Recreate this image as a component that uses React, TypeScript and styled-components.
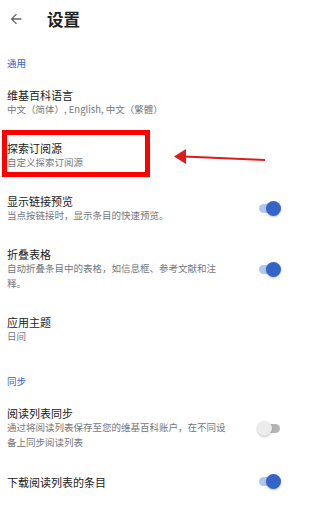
import React from "react";
import styled, { createGlobalStyle } from "styled-components";

const Global = createGlobalStyle`
  html, body { margin: 0; padding: 0; background: #ffffff; }
  body { font-family: "Noto Sans CJK SC", "Noto Sans", sans-serif; }
  * { box-sizing: border-box; }
`;

const Page = styled.div`
  width: 322px;
  min-height: 508px;
  background: #ffffff;
  overflow: hidden;
`;

const Header = styled.header`
  height: 38px;
  display: flex;
  align-items: center;
  padding-left: 8px;
  gap: 23px;
`;

const BackIcon = styled.svg`
  width: 16px;
  height: 16px;
  fill: #5f6368;
  flex: none;
`;

const Title = styled.h1`
  margin: 0;
  font-size: 16.5px;
  font-weight: 700;
  color: #202122;
  line-height: 20px;
`;

const SectionLabel = styled.div`
  padding: 18px 7px 6px;
  font-size: 9.5px;
  line-height: 14px;
  color: #3366cc;
`;

const Row = styled.div`
  position: relative;
  display: flex;
  align-items: center;
  gap: 28px;
  padding: 12px 41px 12px 7px;
`;

const TextCol = styled.div`
  flex: 1;
  min-width: 0;
`;

const ItemTitle = styled.div`
  font-size: 11px;
  line-height: 14px;
  color: #202122;
`;

const ItemSub = styled.div`
  font-size: 9.5px;
  line-height: 15px;
  color: #72777d;
`;

const Track = styled.div<{ $on: boolean }>`
  position: relative;
  width: 24px;
  height: 15px;
  flex: none;
  &::before {
    content: "";
    position: absolute;
    left: 2px;
    right: 1px;
    top: 3px;
    height: 9px;
    border-radius: 5px;
    background: ${(p) => (p.$on ? "#b3c6ef" : "#b5b5b5")};
  }
`;

const Knob = styled.div<{ $on: boolean }>`
  position: absolute;
  top: 0;
  left: ${(p) => (p.$on ? "9px" : "0")};
  width: 15px;
  height: 15px;
  border-radius: 50%;
  background: ${(p) => (p.$on ? "#3365c9" : "#ececec")};
  box-shadow: 0 1px 2px rgba(0, 0, 0, 0.25);
`;

const HighlightBox = styled.div`
  position: absolute;
  left: 2px;
  top: 1px;
  width: 148px;
  height: 47px;
  border: 5px solid #ff0000;
  pointer-events: none;
`;

const PointerArrow = styled.svg`
  position: absolute;
  left: 170px;
  top: 15px;
  width: 100px;
  height: 25px;
  overflow: visible;
`;

const Switch = ({ on }: { on: boolean }) => (
  <Track $on={on}>
    <Knob $on={on} />
  </Track>
);

type Item = {
  title: string;
  sub?: string;
  toggle?: boolean;
  highlight?: boolean;
};

const SettingRow = ({ title, sub, toggle, highlight }: Item) => (
  <Row>
    <TextCol>
      <ItemTitle>{title}</ItemTitle>
      {sub && <ItemSub>{sub}</ItemSub>}
    </TextCol>
    {toggle !== undefined && <Switch on={toggle} />}
    {highlight && (
      <>
        <HighlightBox />
        <PointerArrow viewBox="0 0 100 25">
          <line x1="14" y1="12.5" x2="95" y2="16" stroke="#e01b1b" strokeWidth="2" />
          <polygon points="4,12.5 16,5 16,20" fill="#e01b1b" />
        </PointerArrow>
      </>
    )}
  </Row>
);

const general: Item[] = [
  { title: "维基百科语言", sub: "中文（简体）, English, 中文（繁體）" },
  { title: "探索订阅源", sub: "自定义探索订阅源", highlight: true },
  { title: "显示链接预览", sub: "当点按链接时，显示条目的快速预览。", toggle: true },
  {
    title: "折叠表格",
    sub: "自动折叠条目中的表格，如信息框、参考文献和注释。",
    toggle: true,
  },
  { title: "应用主题", sub: "日间" },
];

const sync: Item[] = [
  {
    title: "阅读列表同步",
    sub: "通过将阅读列表保存至您的维基百科账户，在不同设备上同步阅读列表",
    toggle: false,
  },
  { title: "下载阅读列表的条目", toggle: true },
];

export default function App() {
  return (
    <Page>
      <Global />
      <Header>
        <BackIcon viewBox="0 0 24 24">
          <path d="M20 11H7.83l5.59-5.59L12 4l-8 8 8 8 1.41-1.41L7.83 13H20v-2z" />
        </BackIcon>
        <Title>设置</Title>
      </Header>
      <SectionLabel>通用</SectionLabel>
      {general.map((it) => (
        <SettingRow key={it.title} {...it} />
      ))}
      <SectionLabel>同步</SectionLabel>
      {sync.map((it) => (
        <SettingRow key={it.title} {...it} />
      ))}
    </Page>
  );
}
